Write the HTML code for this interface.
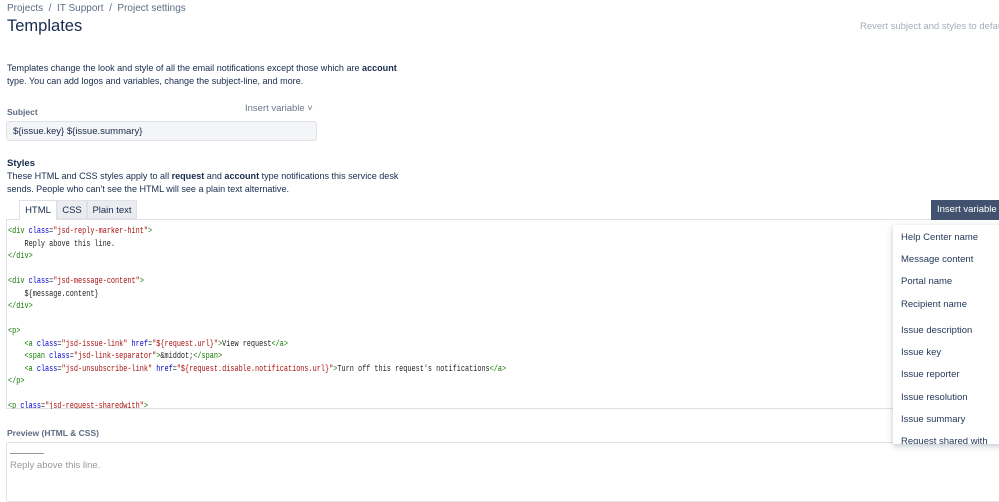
<!DOCTYPE html>
<html><head><meta charset="utf-8"><style>
*{margin:0;padding:0;box-sizing:border-box}
body{width:999px;height:476px;overflow:hidden;background:#fff;font-family:"Liberation Sans",sans-serif;color:#172b4d;position:relative}
.a{position:absolute;white-space:nowrap}
.code{font-family:"Liberation Mono",monospace;font-size:9.6px;color:#222;transform:scaleX(0.715);transform-origin:0 0}
.t{color:#170}.k{color:#00c}.s{color:#a11}
.dd div{position:absolute;left:8px;font-size:9.5px;color:#253858}
</style></head><body>
<div class="a" style="left:7px;top:3px;font-size:10px;color:#5e6c84">Projects &nbsp;/&nbsp; IT Support &nbsp;/&nbsp; Project settings</div>
<div class="a" style="left:7px;top:17px;font-size:16.5px;color:#172b4d">Templates</div>
<div class="a" style="left:860px;top:21px;font-size:9.5px;color:#a5adba">Revert subject and styles to default</div>
<div class="a" style="left:7px;top:62px;font-size:9.05px;line-height:13px;color:#172b4d">Templates change the look and style of all the email notifications except those which are <b>account</b><br>type. You can add logos and variables, change the subject-line, and more.</div>
<div class="a" style="left:7px;top:107px;font-size:8.5px;font-weight:bold;color:#5e6c84">Subject</div>
<div class="a" style="left:245px;top:103px;font-size:9.5px;color:#6b778c">Insert variable ˅</div>
<div class="a" style="left:6px;top:121px;width:311px;height:20px;background:#f4f5f7;border:1px solid #dfe1e6;border-radius:3px;font-size:9.5px;padding:4px 6px;color:#172b4d">${issue.key} ${issue.summary}</div>
<div class="a" style="left:7px;top:158px;font-size:9.5px;font-weight:bold">Styles</div>
<div class="a" style="left:7px;top:170px;font-size:9.05px;line-height:13px">These HTML and CSS styles apply to all <b>request</b> and <b>account</b> type notifications this service desk<br>sends. People who can't see the HTML will see a plain text alternative.</div>
<div class="a" style="left:19px;top:200px;height:20px;width:38px;background:#fff;border:1px solid #dfe1e6;border-bottom:none;font-size:9.5px;text-align:center;line-height:19px;z-index:2">HTML</div>
<div class="a" style="left:57px;top:200px;height:19px;width:30px;background:#ebecf0;border:1px solid #dfe1e6;font-size:9.5px;text-align:center;line-height:19px">CSS</div>
<div class="a" style="left:87px;top:200px;height:19px;width:50px;background:#ebecf0;border:1px solid #dfe1e6;font-size:9.5px;text-align:center;line-height:19px">Plain text</div>
<div class="a" style="left:6px;top:219px;width:1000px;height:190px;border:1px solid #dfe1e6"></div>
<div class="a code" style="left:8px;top:225px;line-height:12.5px"><span class="t">&lt;div</span> <span class="k">class</span>=<span class="s">"jsd-reply-marker-hint"</span><span class="t">&gt;</span><br>&nbsp;&nbsp;&nbsp;&nbsp;Reply above this line.<br><span class="t">&lt;/div&gt;</span><br><br><span class="t">&lt;div</span> <span class="k">class</span>=<span class="s">"jsd-message-content"</span><span class="t">&gt;</span><br>&nbsp;&nbsp;&nbsp;&nbsp;${message.content}<br><span class="t">&lt;/div&gt;</span><br><br><span class="t">&lt;p&gt;</span><br>&nbsp;&nbsp;&nbsp;&nbsp;<span class="t">&lt;a</span> <span class="k">class</span>=<span class="s">"jsd-issue-link"</span> <span class="k">href</span>=<span class="s">"${request.url}"</span><span class="t">&gt;</span>View request<span class="t">&lt;/a&gt;</span><br>&nbsp;&nbsp;&nbsp;&nbsp;<span class="t">&lt;span</span> <span class="k">class</span>=<span class="s">"jsd-link-separator"</span><span class="t">&gt;</span>&amp;middot;<span class="t">&lt;/span&gt;</span><br>&nbsp;&nbsp;&nbsp;&nbsp;<span class="t">&lt;a</span> <span class="k">class</span>=<span class="s">"jsd-unsubscribe-link"</span> <span class="k">href</span>=<span class="s">"${request.disable.notifications.url}"</span><span class="t">&gt;</span>Turn off this request's notifications<span class="t">&lt;/a&gt;</span><br><span class="t">&lt;/p&gt;</span><br><br><span class="t">&lt;p</span> <span class="k">class</span>=<span class="s">"jsd-request-sharedwith"</span><span class="t">&gt;</span></div>
<div class="a" style="left:7px;top:409px;width:1000px;height:10px;background:#fff"></div>
<div class="a" style="left:7px;top:428px;font-size:8.5px;font-weight:bold;color:#5e6c84">Preview (HTML &amp; CSS)</div>
<div class="a" style="left:6px;top:442px;width:1000px;height:60px;border:1px solid #dfe1e6;border-radius:3px"></div>
<div class="a" style="left:10px;top:453px;width:34px;border-top:1px solid #999"></div>
<div class="a" style="left:10px;top:460px;font-size:9.5px;color:#999">Reply above this line.</div>
<div class="a" style="left:931px;top:200px;width:70px;height:20px;background:#42526e;color:#fff;font-size:9.5px;line-height:20px;padding-left:6px">Insert variable ▾</div>
<div class="a dd" style="left:893px;top:225px;width:110px;height:219px;background:#fff;box-shadow:0 2px 6px rgba(9,30,66,.25);overflow:hidden">
<div style="top:7px">Help Center name</div><div style="top:29px">Message content</div><div style="top:51px">Portal name</div><div style="top:74px">Recipient name</div><div style="top:100px">Issue description</div><div style="top:122px">Issue key</div><div style="top:144px">Issue reporter</div><div style="top:167px">Issue resolution</div><div style="top:189px">Issue summary</div><div style="top:211px">Request shared with</div>
</div>
</body></html>
